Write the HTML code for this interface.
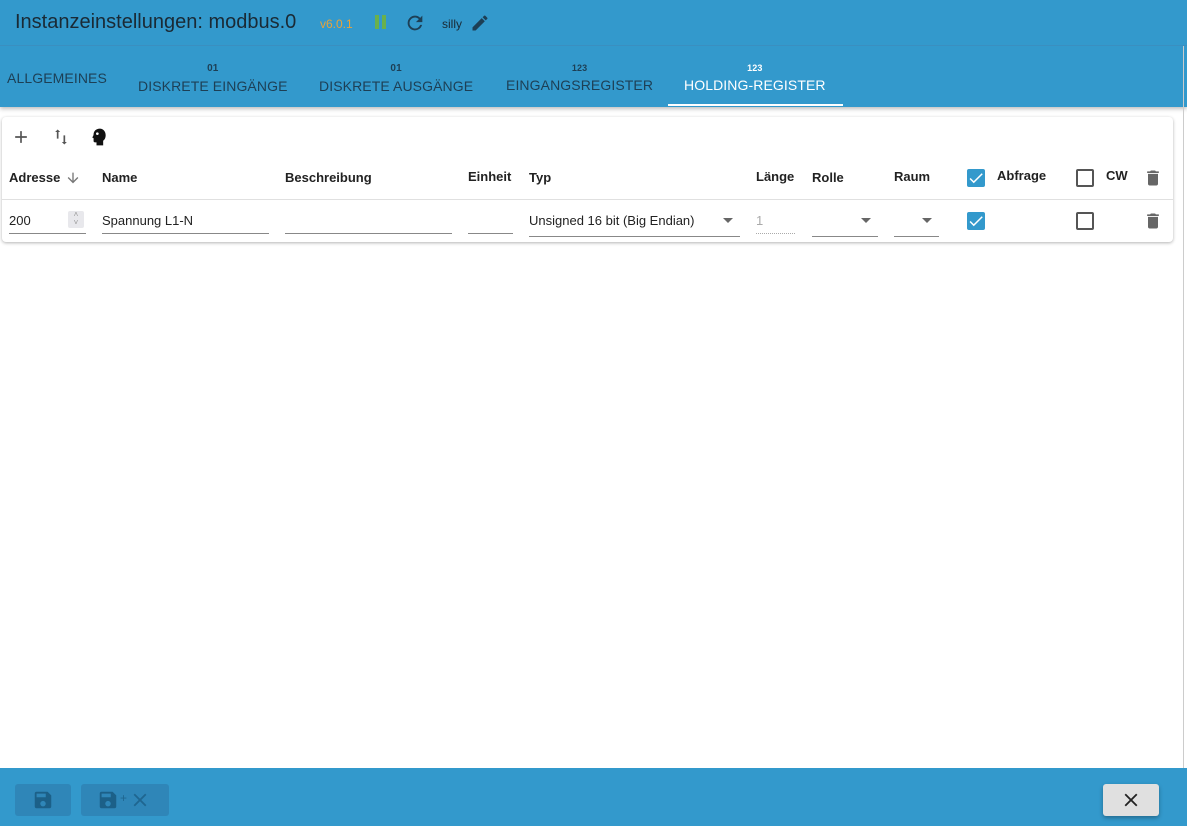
<!DOCTYPE html>
<html><head><meta charset="utf-8"><style>
*{box-sizing:border-box;margin:0;padding:0}
body{width:1187px;height:826px;position:relative;overflow:hidden;background:#fff;font-family:"Liberation Sans",Arial,sans-serif;color:#222}
.abs{position:absolute}
#hdr{left:0;top:0;width:1187px;height:107px;background:#3399cc;box-shadow:0 2px 4px rgba(0,0,0,.25)}
#hdr .line{left:0;top:45px;width:1187px;height:1px;background:#3a8fc0}
.tab{position:absolute;font-size:14px;color:#1d3f55;letter-spacing:.1px;text-align:center}
.tab small{display:block;font-size:10px;font-weight:bold;margin-bottom:4px}
.card{left:2px;top:117px;width:1171px;height:125px;background:#fff;border-radius:4px;box-shadow:0 1px 3px rgba(0,0,0,.3)}
.th{position:absolute;top:170px;font-size:13px;font-weight:bold;color:#222}
.ul{position:absolute;height:1px;background:#888}
.cb{position:absolute;width:18px;height:18px;border-radius:2px}
.cbon{background:#3399cc}
.cboff{border:2px solid #555}
.td{position:absolute;font-size:13px;color:#222}
#ftr{left:0;top:768px;width:1187px;height:58px;background:#3399cc}
.btn{position:absolute;top:784px;height:32px;border-radius:3px;background:#2f86b8}
</style></head><body>
<div id="hdr" class="abs">
<div class="line abs"></div>
<div class="abs" style="left:15px;top:11px;font-size:20px;color:#1a2a35">Instanzeinstellungen: modbus.0</div>
<div class="abs" style="left:320px;top:17px;font-size:12px;color:#e8a33a">v6.0.1</div>
<div class="abs" style="left:375px;top:15px;width:4px;height:14px;background:#6ab04c"></div>
<div class="abs" style="left:382px;top:15px;width:4px;height:14px;background:#6ab04c"></div>
<svg class="abs" style="left:404px;top:12px" width="22" height="22" viewBox="0 0 24 24"><path fill="#1d3f55" d="M17.65 6.35A7.96 7.96 0 0 0 12 4a8 8 0 1 0 7.73 10h-2.08A6 6 0 1 1 12 6c1.66 0 3.14.69 4.22 1.78L13 11h7V4z"/></svg>
<div class="abs" style="left:442px;top:17px;font-size:12px;color:#1a2a35">silly</div>
<svg class="abs" style="left:470px;top:13px" width="20" height="20" viewBox="0 0 24 24"><path fill="#1d3f55" d="M3 17.25V21h3.75L17.81 9.94l-3.75-3.75zM20.71 7.04a1 1 0 0 0 0-1.41l-2.34-2.34a1 1 0 0 0-1.41 0l-1.83 1.83 3.75 3.75z"/></svg>
<div class="tab" style="left:7px;top:70px">ALLGEMEINES</div>
<div class="tab" style="left:138px;top:63px"><small>01</small>DISKRETE EINGÄNGE</div>
<div class="tab" style="left:319px;top:63px"><small>01</small>DISKRETE AUSGÄNGE</div>
<div class="tab" style="left:506px;top:63px"><small style="font-size:9px">123</small>EINGANGSREGISTER</div>
<div class="tab" style="left:684px;top:63px;color:#fff"><small style="font-size:9px">123</small>HOLDING-REGISTER</div>
<div class="abs" style="left:668px;top:104px;width:175px;height:2px;background:#fff"></div>
</div>
<div class="abs" style="left:1183px;top:46px;width:1px;height:722px;background:#ccc"></div>
<div class="card abs"></div>
<svg class="abs" style="left:11px;top:127px" width="20" height="20" viewBox="0 0 24 24"><path fill="#555" d="M19 13h-6v6h-2v-6H5v-2h6V5h2v6h6z"/></svg>
<svg class="abs" style="left:51px;top:127px" width="20" height="20" viewBox="0 0 24 24"><path fill="#555" d="M8 3l-3 3h2v8h2V6h2zM16 21l3-3h-2v-8h-2v8h-2z"/></svg>
<svg class="abs" style="left:89px;top:126px" width="20" height="22" viewBox="0 0 24 24"><path fill="#111" d="M13 2C8.6 2 5.5 5 5.5 9c0 1.5-1.5 3-1.5 3.5s1 .7 1.5 1V17c0 1 .8 1.5 2 1.5h1.5V22h8v-5.5c2-1.5 3-3.8 3-6.5C20 5.5 17 2 13 2z"/><circle cx="10" cy="8" r="1.6" fill="#fff"/></svg>
<div class="th" style="left:9px">Adresse</div>
<svg class="abs" style="left:65px;top:170px" width="16" height="16" viewBox="0 0 24 24"><path fill="#777" d="M20 12l-1.41-1.41L13 16.17V4h-2v12.17l-5.58-5.59L4 12l8 8z"/></svg>
<div class="th" style="left:102px">Name</div>
<div class="th" style="left:285px">Beschreibung</div>
<div class="th" style="left:468px;top:169px">Einheit</div>
<div class="th" style="left:529px">Typ</div>
<div class="th" style="left:756px;top:169px">Länge</div>
<div class="th" style="left:812px">Rolle</div>
<div class="th" style="left:894px;top:169px">Raum</div>
<div class="cb cbon" style="left:967px;top:169px"></div>
<svg class="abs" style="left:967px;top:169px" width="18" height="18" viewBox="0 0 24 24"><path fill="#fff" d="M9 16.2L4.8 12l-1.4 1.4L9 19 21 7l-1.4-1.4z"/></svg>
<div class="th" style="left:997px;top:168px">Abfrage</div>
<div class="cb cboff" style="left:1076px;top:169px"></div>
<div class="th" style="left:1106px;top:168px">CW</div>
<svg class="abs" style="left:1143px;top:168px" width="20" height="20" viewBox="0 0 24 24"><path fill="#666" d="M6 19c0 1.1.9 2 2 2h8c1.1 0 2-.9 2-2V7H6zM19 4h-3.5l-1-1h-5l-1 1H5v2h14z"/></svg>
<div class="abs" style="left:2px;top:199px;width:1171px;height:1px;background:#e0e0e0"></div>
<div class="td" style="left:9px;top:213px">200</div>
<div class="abs" style="left:68px;top:211px;width:16px;height:17px;background:#e8e8ec;border-radius:2px;font-size:8px;color:#999;text-align:center;line-height:8px">˄<br>˅</div>
<div class="ul" style="left:9px;top:233px;width:77px"></div>
<div class="td" style="left:102px;top:213px">Spannung L1-N</div>
<div class="ul" style="left:102px;top:233px;width:167px"></div>
<div class="ul" style="left:285px;top:233px;width:167px"></div>
<div class="ul" style="left:468px;top:233px;width:45px"></div>
<div class="td" style="left:529px;top:213px">Unsigned 16 bit (Big Endian)</div>
<div class="abs" style="left:723px;top:218px;border:5px solid transparent;border-top-color:#666"></div>
<div class="ul" style="left:529px;top:236px;width:211px"></div>
<div class="td" style="left:756px;top:213px;color:#aaa">1</div>
<div class="abs" style="left:756px;top:233px;width:39px;border-top:1px dotted #aaa"></div>
<div class="abs" style="left:861px;top:218px;border:5px solid transparent;border-top-color:#666"></div>
<div class="ul" style="left:812px;top:236px;width:66px"></div>
<div class="abs" style="left:922px;top:218px;border:5px solid transparent;border-top-color:#666"></div>
<div class="ul" style="left:894px;top:236px;width:45px"></div>
<div class="cb cbon" style="left:967px;top:212px"></div>
<svg class="abs" style="left:967px;top:212px" width="18" height="18" viewBox="0 0 24 24"><path fill="#fff" d="M9 16.2L4.8 12l-1.4 1.4L9 19 21 7l-1.4-1.4z"/></svg>
<div class="cb cboff" style="left:1076px;top:212px"></div>
<svg class="abs" style="left:1143px;top:211px" width="20" height="20" viewBox="0 0 24 24"><path fill="#666" d="M6 19c0 1.1.9 2 2 2h8c1.1 0 2-.9 2-2V7H6zM19 4h-3.5l-1-1h-5l-1 1H5v2h14z"/></svg>
<div id="ftr" class="abs"></div>
<div class="btn" style="left:15px;width:56px"></div>
<svg class="abs" style="left:32px;top:789px" width="22" height="22" viewBox="0 0 24 24"><path fill="#1c6088" d="M17 3H5a2 2 0 0 0-2 2v14a2 2 0 0 0 2 2h14a2 2 0 0 0 2-2V7zm-5 16a3 3 0 1 1 0-6 3 3 0 0 1 0 6zm3-10H5V5h10z"/></svg>
<div class="btn" style="left:81px;width:88px"></div>
<svg class="abs" style="left:97px;top:789px" width="22" height="22" viewBox="0 0 24 24"><path fill="#1c6088" d="M17 3H5a2 2 0 0 0-2 2v14a2 2 0 0 0 2 2h14a2 2 0 0 0 2-2V7zm-5 16a3 3 0 1 1 0-6 3 3 0 0 1 0 6zm3-10H5V5h10z"/></svg>
<div class="abs" style="left:120px;top:791px;font-size:12px;color:#1f6690">+</div>
<svg class="abs" style="left:129px;top:789px" width="22" height="22" viewBox="0 0 24 24"><path fill="#1f6690" d="M19 6.41L17.59 5 12 10.59 6.41 5 5 6.41 10.59 12 5 17.59 6.41 19 12 13.41 17.59 19 19 17.59 13.41 12z"/></svg>
<div class="abs" style="left:1103px;top:784px;width:56px;height:32px;background:#e0e0e0;border-radius:3px;box-shadow:0 2px 4px rgba(0,0,0,.3)"></div>
<svg class="abs" style="left:1120px;top:789px" width="22" height="22" viewBox="0 0 24 24"><path fill="#222" d="M19 6.41L17.59 5 12 10.59 6.41 5 5 6.41 10.59 12 5 17.59 6.41 19 12 13.41 17.59 19 19 17.59 13.41 12z"/></svg>
</body></html>
